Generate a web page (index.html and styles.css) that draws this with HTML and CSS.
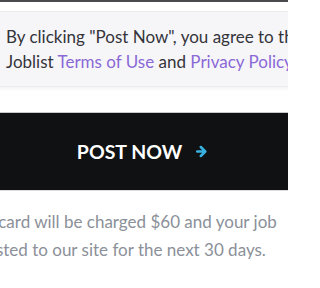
FILE: index.html
```html
<!DOCTYPE html>
<html>
<head>
<meta charset="utf-8">
<link rel="stylesheet" href="styles.css">
</head>
<body>
<div class="viewport">
  <div class="topline"></div>
  <div class="page">
    <div class="notice">
      <p>By clicking "Post Now", you agree to the Joblist <a href="#">Terms of Use</a> and <a href="#">Privacy Policy</a>.</p>
    </div>
    <button class="post-btn">
      <span class="label">POST NOW</span>
      <svg class="arrow" width="11" height="13" viewBox="0 0 11 13" aria-hidden="true">
        <path d="M1.2 6.5 H9 M4.8 2 L9.3 6.5 L4.8 11" fill="none" stroke="#39b1e0" stroke-width="2.5" stroke-linecap="round" stroke-linejoin="round"/>
      </svg>
    </button>
    <p class="charge">Your credit card will be charged $60 and your job will be posted to our site for the next 30 days.</p>
  </div>
</div>
</body>
</html>
```
FILE: styles.css
```css
html, body {
  margin: 0;
  padding: 0;
  background: #ffffff;
}
body {
  font-family: Lato, "Open Sans", sans-serif;
}
.viewport {
  width: 288px;
  height: 288px;
  overflow: hidden;
  position: relative;
}
.topline {
  height: 2px;
  background: #4b4b4d;
}
.page {
  display: flex;
  flex-direction: column;
  width: 400px;
  margin-left: -60px;
  padding-top: 9px;
}
.notice {
  background: #f6f6f9;
  border: 1px solid #ececf1;
  box-shadow: 0 2px 3px rgba(0,0,0,0.05);
  padding: 12px 20px 12px 65px;
}
.notice p {
  margin: 0;
  font-size: 17px;
  line-height: 25px;
  color: #34343a;
}
.notice a {
  color: #8a68d6;
  text-decoration: none;
}
.post-btn {
  margin-top: 25px;
  height: 79px;
  background: #0f1112;
  border: none;
  border-top: 1px solid #c9c9cc;
  border-bottom: 1px solid #dcdcde;
  display: flex;
  align-items: center;
  justify-content: center;
  gap: 14px;
  font-family: Lato, sans-serif;
  padding: 0 0 0 4px;
}
.post-btn .label {
  color: #ffffff;
  font-size: 19.5px;
  font-weight: 700;
}
.post-btn .arrow {
  display: block;
}
.charge {
  margin: 16.5px 28px 0 -28px;
  padding-right: 34px;
  text-align: center;
  font-size: 17px;
  line-height: 28px;
  color: #8b9099;
}
```
